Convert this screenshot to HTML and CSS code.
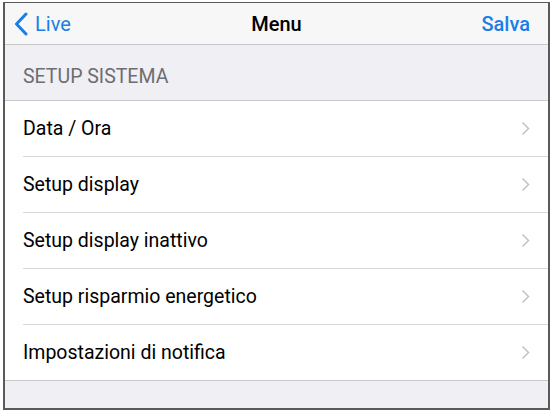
FILE: index.html
```html
<!DOCTYPE html>
<html>
<head>
<meta charset="utf-8">
<link rel="stylesheet" href="styles.css">
</head>
<body>
<div class="frame">
  <header class="nav">
    <div class="back">
      <svg class="back-chev" width="14" height="24" viewBox="0 0 14 24"><path d="M12 2 L2.5 12 L12 22" fill="none" stroke="#1a7ee6" stroke-width="3" stroke-linecap="round" stroke-linejoin="round"/></svg>
      <span>Live</span>
    </div>
    <div class="title">Menu</div>
    <div class="save">Salva</div>
  </header>
  <div class="section">SETUP SISTEMA</div>
  <ul class="list">
    <li class="row"><span>Data / Ora</span><svg class="chev" width="9" height="15" viewBox="0 0 9 15"><path d="M1.5 1.5 L7.5 7.5 L1.5 13.5" fill="none" stroke="#c4c4c9" stroke-width="1.6"/></svg></li>
    <li class="row"><span>Setup display</span><svg class="chev" width="9" height="15" viewBox="0 0 9 15"><path d="M1.5 1.5 L7.5 7.5 L1.5 13.5" fill="none" stroke="#c4c4c9" stroke-width="1.6"/></svg></li>
    <li class="row"><span>Setup display inattivo</span><svg class="chev" width="9" height="15" viewBox="0 0 9 15"><path d="M1.5 1.5 L7.5 7.5 L1.5 13.5" fill="none" stroke="#c4c4c9" stroke-width="1.6"/></svg></li>
    <li class="row"><span>Setup risparmio energetico</span><svg class="chev" width="9" height="15" viewBox="0 0 9 15"><path d="M1.5 1.5 L7.5 7.5 L1.5 13.5" fill="none" stroke="#c4c4c9" stroke-width="1.6"/></svg></li>
    <li class="row"><span>Impostazioni di notifica</span><svg class="chev" width="9" height="15" viewBox="0 0 9 15"><path d="M1.5 1.5 L7.5 7.5 L1.5 13.5" fill="none" stroke="#c4c4c9" stroke-width="1.6"/></svg></li>
  </ul>
  <div class="footer"></div>
</div>
</body>
</html>
```
FILE: styles.css
```css
html, body {
  margin: 0;
  padding: 0;
  background: #ffffff;
}
body {
  font-family: "Roboto", "Liberation Sans", sans-serif;
  width: 552px;
  height: 414px;
  overflow: hidden;
}
.frame {
  margin: 2px 0 0 3px;
  width: 543px;
  height: 405px;
  border: 2px solid #5a5a5a;
  border-top-width: 1px;
  background: #efeff4;
  display: flex;
  flex-direction: column;
  overflow: hidden;
}
.nav {
  height: 41px;
  flex: none;
  background: #f7f7f7;
  border-bottom: 1px solid #c8c7cc;
  display: grid;
  grid-template-columns: 1fr auto 1fr;
  align-items: center;
  padding: 0 18px;
}
.back {
  display: flex;
  align-items: center;
  gap: 7px;
  margin-left: -9px;
  color: #1a7ee6;
  font-size: 20px;
}
.title {
  font-size: 20px;
  font-weight: 500;
  color: #000;
}
.save {
  justify-self: end;
  color: #1a7ee6;
  font-size: 20px;
  font-weight: 500;
}
.section {
  height: 56px;
  flex: none;
  display: flex;
  align-items: center;
  padding: 8px 0 0 18px;
  box-sizing: border-box;
  font-size: 19.5px;
  color: #6d6d72;
  border-bottom: 1px solid #c8c7cc;
}
.list {
  list-style: none;
  margin: 0;
  padding: 0 0 0 18px;
  background: #fff;
  flex: none;
  border-bottom: 1px solid #c8c7cc;
}
.row {
  height: 55px;
  display: flex;
  align-items: center;
  justify-content: space-between;
  padding-right: 18px;
  font-size: 19.5px;
  color: #000;
  border-bottom: 1px solid #d8d8dc;
}
.row:last-child {
  border-bottom: none;
}
.chev {
  flex: none;
}
.footer {
  flex: 1;
}
```
